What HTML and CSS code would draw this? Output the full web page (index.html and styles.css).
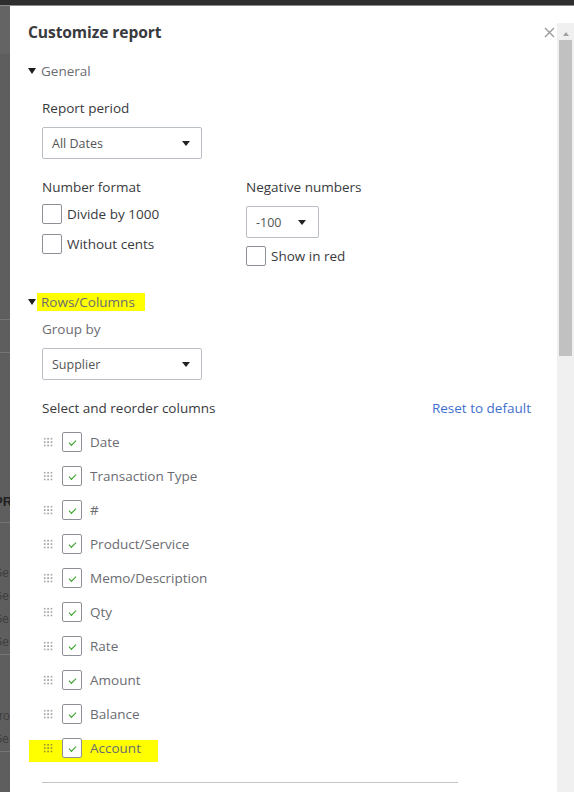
FILE: index.html
```html
<!DOCTYPE html>
<html>
<head>
<meta charset="utf-8">
<link rel="stylesheet" href="styles.css">
</head>
<body>
<div class="topbar"></div>
<div class="stage">
  <div class="behind">
    <div class="bg-top"></div>
    <div class="bg-line l1"></div>
    <div class="bg-line l2"></div>
    <div class="bg-pr">PR</div>
    <div class="bg-line l3"></div>
    <div class="bg-txt t1">Ge</div>
    <div class="bg-txt">Ge</div>
    <div class="bg-txt">Ge</div>
    <div class="bg-txt">Ge</div>
    <div class="bg-line l4"></div>
    <div class="bg-txt t5">Pro</div>
    <div class="bg-txt">Ge</div>
    <div class="bg-line l5"></div>
  </div>
  <div class="panel">
    <div class="header">
      <h1 class="title">Customize report</h1>
      <button class="close" aria-label="Close">
        <svg width="11" height="11" viewBox="0 0 11 11"><path d="M1 1 L10 10 M10 1 L1 10" stroke="#9a9a9a" stroke-width="1.4" fill="none"/></svg>
      </button>
    </div>
    <div class="content">
      <div class="section-head"><span class="caret"></span><span class="sec-title">General</span></div>
      <div class="section">
        <div class="label lbl-period">Report period</div>
        <div class="select wide"><span>All Dates</span><span class="arrow"></span></div>
        <div class="numgrid">
          <div class="col">
            <div class="label">Number format</div>
            <label class="check first"><span class="box"></span><span>Divide by 1000</span></label>
            <label class="check second"><span class="box"></span><span>Without cents</span></label>
          </div>
          <div class="col">
            <div class="label">Negative numbers</div>
            <div class="select narrow"><span>-100</span><span class="arrow"></span></div>
            <label class="check red"><span class="box"></span><span>Show in red</span></label>
          </div>
        </div>
      </div>
      <div class="section-head rows-head"><span class="caret"></span><span class="sec-title hl-text">Rows/Columns</span></div>
      <div class="section">
        <div class="label light lbl-group">Group by</div>
        <div class="select wide"><span>Supplier</span><span class="arrow"></span></div>
        <div class="cols-head">
          <span class="label">Select and reorder columns</span>
          <a class="reset">Reset to default</a>
        </div>
        <ul class="collist">
          <li class="colrow"><span class="grip"></span><span class="box checked"></span><span>Date</span></li>
          <li class="colrow"><span class="grip"></span><span class="box checked"></span><span>Transaction Type</span></li>
          <li class="colrow"><span class="grip"></span><span class="box checked"></span><span>#</span></li>
          <li class="colrow"><span class="grip"></span><span class="box checked"></span><span>Product/Service</span></li>
          <li class="colrow"><span class="grip"></span><span class="box checked"></span><span>Memo/Description</span></li>
          <li class="colrow"><span class="grip"></span><span class="box checked"></span><span>Qty</span></li>
          <li class="colrow"><span class="grip"></span><span class="box checked"></span><span>Rate</span></li>
          <li class="colrow"><span class="grip"></span><span class="box checked"></span><span>Amount</span></li>
          <li class="colrow"><span class="grip"></span><span class="box checked"></span><span>Balance</span></li>
          <li class="colrow hl-row"><span class="grip"></span><span class="box checked"></span><span>Account</span></li>
        </ul>
        <div class="divider"></div>
      </div>
    </div>
  </div>
  <div class="scrollbar">
    <div class="track">
      <div class="up"></div>
      <div class="thumb"></div>
    </div>
  </div>
</div>
</body>
</html>
```
FILE: styles.css
```css
* { box-sizing: border-box; }
html, body { margin: 0; padding: 0; }
body {
  width: 574px;
  height: 792px;
  overflow: hidden;
  background: #5f5f5f;
  font-family: "Open Sans", "Lato", sans-serif;
  color: #393a3d;
}
.topbar {
  height: 6px;
  background: #2e2e2e;
  border-bottom: 1px solid #8a8a8a;
}
.stage {
  display: flex;
  height: 786px;
}
.behind {
  width: 10px;
  flex: none;
  overflow: hidden;
  background: #5e5e5e;
  font-family: "Liberation Sans", sans-serif;
  font-size: 12px;
  color: #3a3a3a;
  white-space: nowrap;
}
.bg-top { height: 48px; background: #646464; }
.bg-line { height: 1px; background: #757575; }
.l1 { margin-top: 265px; }
.l2 { margin-top: 32px; }
.bg-pr { margin-top: 141px; margin-left: -6px; font-weight: bold; font-size: 13px; color: #222; line-height: 16px; }
.l3 { margin-top: 12px; }
.bg-txt { margin-left: -7px; line-height: 23px; color: #3e3e3e; }
.t1 { margin-top: 39px; }
.l4 { margin-top: 0; }
.t5 { margin-top: 50px; margin-left: -9px; }
.l5 { margin-top: 0; }

.panel {
  flex: 1;
  background: #fff;
  padding: 16px 2px 0 18px;
  overflow: hidden;
}
.header {
  display: flex;
  justify-content: space-between;
  align-items: flex-start;
  height: 20px;
}
.title {
  margin: 0;
  font-size: 15.6px;
  line-height: 20px;
  font-weight: 700;
  color: #393a3d;
  letter-spacing: -0.1px;
}
.close {
  border: 0;
  background: none;
  padding: 0;
  margin-top: 5px;
  width: 11px;
  height: 11px;
  display: block;
}
.close svg { display: block; }

.content { padding-right: 24px; }

.section-head {
  display: flex;
  align-items: center;
  height: 20px;
  margin-top: 19px;
}
.caret {
  width: 0; height: 0;
  border-left: 4.5px solid transparent;
  border-right: 4.5px solid transparent;
  border-top: 6px solid #1e1e1e;
  margin-right: 5px;
}
.sec-title {
  font-size: 13.5px;
  color: #6b6c72;
  line-height: 20px;
}
.hl-text {
  background: #ffff00;
  margin-left: -4px;
  padding: 0 10px 0 4px;
  height: 18px;
  line-height: 18px;
}
.section { padding-left: 14px; }

.label {
  font-size: 13.5px;
  line-height: 20px;
  font-weight: 500;
  color: #393a3d;
}
.label.light { color: #6b6c72; font-weight: 400; }
.lbl-period { margin-top: 17px; }
.lbl-group { margin-top: 7px; }

.select {
  display: flex;
  justify-content: space-between;
  align-items: center;
  height: 32px;
  border: 1px solid #babec5;
  border-radius: 2px;
  font-size: 12.5px;
  color: #555;
  padding: 0 11px 0 9px;
  margin-top: 9px;
}
.select.wide { width: 160px; }
.select.narrow { width: 73px; padding-right: 12px; }
.arrow {
  width: 0; height: 0;
  border-left: 4px solid transparent;
  border-right: 4px solid transparent;
  border-top: 5px solid #222;
}

.numgrid {
  display: grid;
  grid-template-columns: 204px 1fr;
  margin-top: 18px;
}
.check {
  display: flex;
  align-items: center;
  font-size: 13.5px;
  font-weight: 500;
  color: #393a3d;
  line-height: 20px;
}
.check .box { margin-right: 5px; }
.check.first { margin-top: 7px; }
.check.second { margin-top: 10px; }
.check.red { margin-top: 8px; }
.box {
  width: 20px;
  height: 20px;
  flex: none;
  border: 1px solid #8d9096;
  border-radius: 2px;
  background: #fff;
  display: inline-block;
  position: relative;
}
.box.checked::after {
  content: "";
  position: absolute;
  left: 6px;
  top: 7px;
  width: 6px;
  height: 3px;
  border-left: 1.7px solid #2ca01c;
  border-bottom: 1.7px solid #2ca01c;
  transform: rotate(-45deg);
}

.rows-head { margin-top: 26px; }

.cols-head {
  display: flex;
  justify-content: space-between;
  align-items: center;
  margin-top: 18px;
  height: 20px;
}
.reset {
  font-size: 13.5px;
  color: #3f6fd0;
  line-height: 20px;
}

.collist {
  list-style: none;
  margin: 14px 0 0;
  padding: 0;
  display: flex;
  flex-direction: column;
  gap: 14px;
}
.colrow {
  display: flex;
  align-items: center;
  height: 20px;
  font-size: 13.5px;
  color: #6b6c72;
  position: relative;
}
.grip {
  width: 10px;
  height: 10px;
  margin: 0 9px 0 1px;
  background-image: radial-gradient(circle, #a8a8a8 0.9px, transparent 1.1px);
  background-size: 3.4px 3.4px;
  background-position: 0 0;
}
.colrow .box { margin-right: 8px; }
.hl-row { width: fit-content; }
.hl-row::before {
  content: "";
  position: absolute;
  left: -13px;
  right: -17px;
  top: 2px;
  bottom: -4px;
  background: #ffff00;
  z-index: 0;
}
.hl-row > * { position: relative; z-index: 1; }
.hl-row .box { position: relative; }
.hl-row .grip { background-image: radial-gradient(circle, #9a9a30 0.9px, transparent 1.1px); }

.divider {
  width: 416px;
  height: 1px;
  background: #c4c4c4;
  margin-top: 24px;
}

.scrollbar {
  width: 17px;
  flex: none;
  background: #fff;
  padding-top: 17px;
}
.track {
  height: 100%;
  background: #f0f0f0;
  padding: 9px 2px 0;
}
.up {
  width: 0; height: 0;
  margin: 0 auto;
  border-left: 3.5px solid transparent;
  border-right: 3.5px solid transparent;
  border-bottom: 4px solid #a3a3a3;
}
.thumb {
  margin-top: 4px;
  height: 316px;
  background: #c1c1c1;
}
```
